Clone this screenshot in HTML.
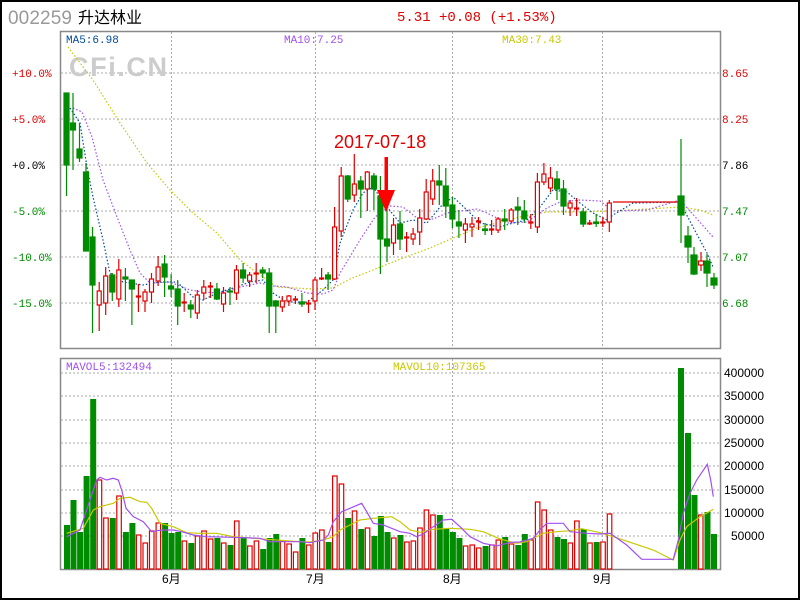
<!DOCTYPE html>
<html><head><meta charset="utf-8"><style>
html,body{margin:0;padding:0;background:#fff}
body{width:800px;height:600px;overflow:hidden}
</style></head><body>
<svg width="800" height="600" viewBox="0 0 800 600" xmlns="http://www.w3.org/2000/svg" font-family="Liberation Mono, monospace">
<rect x="1" y="1" width="798" height="598" fill="#fff" stroke="#000" stroke-width="2"/>
<text x="8" y="24" font-family="Liberation Sans, sans-serif" font-size="19" fill="#999" textLength="64">002259</text>
<text x="78" y="23" font-family="Liberation Sans, 'Noto Sans CJK SC', sans-serif" font-size="16" fill="#000">升达林业</text>
<text x="397" y="21" font-size="14" fill="#e00000">5.31 +0.08 (+1.53%)</text>

<rect x="60.5" y="31.5" width="660" height="317" fill="#fff" stroke="#888" stroke-width="1.5"/>
<g stroke="#aaa" stroke-width="1" stroke-dasharray="2 2">
<line x1="61" y1="73" x2="720" y2="73"/><line x1="61" y1="119" x2="720" y2="119"/><line x1="61" y1="165" x2="720" y2="165"/><line x1="61" y1="211" x2="720" y2="211"/><line x1="61" y1="257" x2="720" y2="257"/><line x1="61" y1="303" x2="720" y2="303"/>
<line x1="171.5" y1="32" x2="171.5" y2="348"/><line x1="315.5" y1="32" x2="315.5" y2="348"/><line x1="452.5" y1="32" x2="452.5" y2="348"/><line x1="602.5" y1="32" x2="602.5" y2="348"/>
</g>
<text x="69" y="76" font-family="Liberation Sans, sans-serif" font-weight="bold" font-size="27" fill="#ccc" textLength="98">CFi.CN</text>
<text x="66" y="43" font-size="11" fill="#004c99">MA5:6.98</text>
<text x="284" y="43" font-size="11" fill="#a050f0">MA10:7.25</text>
<text x="502" y="43" font-size="11" fill="#c8c800">MA30:7.43</text>
<g font-size="11">
<text x="12" y="77" fill="#e00000">+10.0%</text>
<text x="12" y="123" fill="#e00000">+5.0%</text>
<text x="12" y="169" fill="#000">+0.0%</text>
<text x="12" y="215" fill="#008c00">-5.0%</text>
<text x="12" y="261" fill="#008c00">-10.0%</text>
<text x="12" y="307" fill="#008c00">-15.0%</text>
<text x="722" y="77" fill="#e00000">8.65</text>
<text x="722" y="123" fill="#e00000">8.25</text>
<text x="722" y="169" fill="#000">7.86</text>
<text x="722" y="215" fill="#008c00">7.47</text>
<text x="722" y="261" fill="#008c00">7.07</text>
<text x="722" y="307" fill="#008c00">6.68</text>
</g>

<g fill="none" stroke-width="1.2" stroke-dasharray="1.5 2">
<polyline stroke="#c8c800" points="68,47 93,80 120,123 147,163 170,190 193,213 217,233 240,260 260,275 277,287 313,289 333,288 350,279 373,270 403,258 430,248 453,238 477,228 497,223 520,217 547,212 580,212 613,211 680,207 700,210 713,215"/>
<polyline stroke="#a050f0" points="73,108 82,112 92,137 103,180 117,217 130,250 140,273 150,283 170,282 190,290 203,292 220,293 240,287 260,283 273,286 287,287 307,293 323,294 333,290 340,273 360,240 375,217 390,206 403,207 417,218 433,219 447,213 460,211 477,209 487,213 507,223 527,222 547,208 560,202 580,200 600,201 613,211 647,210 680,200 690,211 713,237"/>
<polyline stroke="#004c99" points="70,108 80,123 87,167 93,197 103,240 110,273 123,282 143,285 160,282 177,282 193,297 203,300 217,293 233,288 250,282 263,280 273,293 287,302 307,302 323,290 333,280 340,243 353,210 363,193 373,187 387,207 400,223 413,220 427,223 440,207 453,197 467,210 480,223 500,227 513,223 527,220 540,207 553,190 567,192 580,203 593,213 607,220 613,215 633,203 680,202 693,227 707,253 713,267"/>
</g>
<line x1="613" y1="202" x2="680" y2="202" stroke="#e00000" stroke-width="1.2"/>

<g stroke-width="1.2">
<g stroke="#008c00" fill="#008c00">
<line x1="66.5" y1="93" x2="66.5" y2="196"/><rect x="64" y="93" width="5" height="72"/>
<line x1="73" y1="93" x2="73" y2="170"/><rect x="70.5" y="123" width="5" height="7"/>
<line x1="79.5" y1="123" x2="79.5" y2="162"/><rect x="77" y="149" width="5" height="9"/>
<line x1="86" y1="163" x2="86" y2="251"/><rect x="83.5" y="172" width="5" height="79"/>
<line x1="92.5" y1="227" x2="92.5" y2="333"/><rect x="90" y="237" width="5" height="48"/>
<line x1="112.3" y1="273" x2="112.3" y2="301"/><rect x="109.8" y="275" width="5" height="17"/>
<line x1="125.4" y1="268" x2="125.4" y2="301"/><rect x="122.9" y="277" width="5" height="2"/>
<line x1="131.9" y1="280" x2="131.9" y2="325"/><rect x="129.4" y="280" width="5" height="9"/>
<line x1="164.6" y1="255" x2="164.6" y2="297"/><rect x="162.1" y="264" width="5" height="13"/>
<line x1="171.1" y1="274" x2="171.1" y2="297"/><rect x="168.6" y="286" width="5" height="3"/>
<line x1="177.7" y1="280" x2="177.7" y2="325"/><rect x="175.2" y="289" width="5" height="17"/>
<line x1="190.8" y1="300" x2="190.8" y2="318"/><rect x="188.3" y="305" width="5" height="4"/>
<line x1="216.9" y1="283" x2="216.9" y2="300"/><rect x="214.4" y="289" width="5" height="10"/>
<line x1="230" y1="287" x2="230" y2="305"/><rect x="227.5" y="291" width="5" height="1"/>
<line x1="243.1" y1="263" x2="243.1" y2="283"/><rect x="240.6" y="270" width="5" height="8"/>
<line x1="262.7" y1="267" x2="262.7" y2="278"/><rect x="260.2" y="270" width="5" height="3"/>
<line x1="269.2" y1="268" x2="269.2" y2="333"/><rect x="266.7" y="273" width="5" height="33"/>
<line x1="275.8" y1="300" x2="275.8" y2="333"/><rect x="273.3" y="301" width="5" height="5"/>
<line x1="301.9" y1="293" x2="301.9" y2="307"/><rect x="299.4" y="302" width="5" height="2"/>
<line x1="328.1" y1="272" x2="328.1" y2="290"/><rect x="325.6" y="275" width="5" height="4"/>
<line x1="347.7" y1="175" x2="347.7" y2="202"/><rect x="345.2" y="176" width="5" height="23"/>
<line x1="360.8" y1="176" x2="360.8" y2="218"/><rect x="358.3" y="181" width="5" height="8"/>
<line x1="373.9" y1="173" x2="373.9" y2="210"/><rect x="371.4" y="176" width="5" height="13"/>
<line x1="380.4" y1="176" x2="380.4" y2="274"/><rect x="377.9" y="196" width="5" height="43"/>
<line x1="387" y1="207" x2="387" y2="262"/><rect x="384.5" y="239" width="5" height="7"/>
<line x1="400" y1="211" x2="400" y2="250"/><rect x="397.5" y="224" width="5" height="15"/>
<line x1="439.3" y1="165" x2="439.3" y2="205"/><rect x="436.8" y="181" width="5" height="4"/>
<line x1="445.8" y1="168" x2="445.8" y2="218"/><rect x="443.3" y="186" width="5" height="20"/>
<line x1="452.4" y1="197" x2="452.4" y2="228"/><rect x="449.9" y="205" width="5" height="14"/>
<line x1="458.9" y1="210" x2="458.9" y2="238"/><rect x="456.4" y="222" width="5" height="4"/>
<line x1="485.1" y1="223" x2="485.1" y2="235"/><rect x="482.6" y="229" width="5" height="1.5"/>
<line x1="504.7" y1="209" x2="504.7" y2="230"/><rect x="502.2" y="219" width="5" height="2"/>
<line x1="517.8" y1="197" x2="517.8" y2="225"/><rect x="515.3" y="207" width="5" height="3"/>
<line x1="524.3" y1="200" x2="524.3" y2="223"/><rect x="521.8" y="211" width="5" height="8"/>
<line x1="557" y1="171" x2="557" y2="200"/><rect x="554.5" y="179" width="5" height="10"/>
<line x1="563.5" y1="180" x2="563.5" y2="215"/><rect x="561" y="189" width="5" height="17"/>
<line x1="583.2" y1="208" x2="583.2" y2="227"/><rect x="580.7" y="212" width="5" height="12"/>
<line x1="596.2" y1="214" x2="596.2" y2="227"/><rect x="593.7" y="222" width="5" height="1.5"/>
<line x1="681" y1="139" x2="681" y2="243"/><rect x="678" y="196" width="6" height="19"/>
<line x1="688" y1="226" x2="688" y2="263"/><rect x="685" y="236" width="6" height="11"/>
<line x1="694" y1="247" x2="694" y2="275"/><rect x="691" y="255" width="6" height="19"/>
<line x1="707" y1="254" x2="707" y2="287"/><rect x="704" y="261" width="6" height="12"/>
<line x1="714" y1="273" x2="714" y2="289"/><rect x="711" y="278" width="6" height="7"/>
</g>
<g stroke="#e00000" fill="#fff">
<line x1="99.2" y1="282" x2="99.2" y2="331"/><rect x="97.2" y="291" width="4" height="14"/>
<line x1="105.7" y1="267" x2="105.7" y2="315"/><rect x="103.7" y="276" width="4" height="27"/>
<line x1="118.8" y1="259" x2="118.8" y2="307"/><rect x="116.8" y="270" width="4" height="29"/>
<line x1="138.4" y1="284" x2="138.4" y2="312"/><rect x="136.4" y="296" width="4" height="1"/>
<line x1="145" y1="289" x2="145" y2="312"/><rect x="143" y="292" width="4" height="9"/>
<line x1="151.5" y1="273" x2="151.5" y2="303"/><rect x="149.5" y="279" width="4" height="13"/>
<line x1="158.1" y1="256" x2="158.1" y2="286"/><rect x="156.1" y="267" width="4" height="14"/>
<line x1="184.2" y1="293" x2="184.2" y2="312"/><rect x="182.2" y="302" width="4" height="1"/>
<line x1="197.3" y1="290" x2="197.3" y2="319"/><rect x="195.3" y="295" width="4" height="18"/>
<line x1="203.8" y1="280" x2="203.8" y2="300"/><rect x="201.8" y="287" width="4" height="6"/>
<line x1="210.4" y1="282" x2="210.4" y2="298"/><rect x="208.4" y="286" width="4" height="1"/>
<line x1="223.5" y1="287" x2="223.5" y2="312"/><rect x="221.5" y="293" width="4" height="11"/>
<line x1="236.5" y1="265" x2="236.5" y2="300"/><rect x="234.5" y="270" width="4" height="23"/>
<line x1="249.6" y1="272" x2="249.6" y2="287"/><rect x="247.6" y="275" width="4" height="6"/>
<line x1="256.2" y1="263" x2="256.2" y2="283"/><rect x="254.2" y="273" width="4" height="1"/>
<line x1="282.3" y1="296" x2="282.3" y2="312"/><rect x="280.3" y="301" width="4" height="6"/>
<line x1="288.9" y1="295" x2="288.9" y2="306"/><rect x="286.9" y="296" width="4" height="5"/>
<line x1="295.4" y1="296" x2="295.4" y2="304"/><rect x="293.4" y="299" width="4" height="1"/>
<line x1="308.5" y1="300" x2="308.5" y2="313"/><rect x="306.5" y="303" width="4" height="1"/>
<line x1="315" y1="277" x2="315" y2="310"/><rect x="313" y="280" width="4" height="21"/>
<line x1="321.6" y1="268" x2="321.6" y2="280"/><rect x="319.6" y="278" width="4" height="1"/>
<line x1="334.6" y1="207" x2="334.6" y2="280"/><rect x="332.6" y="227" width="4" height="52"/>
<line x1="341.2" y1="167" x2="341.2" y2="237"/><rect x="339.2" y="176" width="4" height="55"/>
<line x1="354.3" y1="154" x2="354.3" y2="202"/><rect x="352.3" y="184" width="4" height="11"/>
<line x1="367.3" y1="171" x2="367.3" y2="211"/><rect x="365.3" y="172" width="4" height="17"/>
<line x1="393.5" y1="218" x2="393.5" y2="255"/><rect x="391.5" y="225" width="4" height="18"/>
<line x1="406.6" y1="232" x2="406.6" y2="252"/><rect x="404.6" y="237" width="4" height="1"/>
<line x1="413.1" y1="228" x2="413.1" y2="245"/><rect x="411.1" y="234" width="4" height="5"/>
<line x1="419.7" y1="209" x2="419.7" y2="245"/><rect x="417.7" y="218" width="4" height="14"/>
<line x1="426.2" y1="179" x2="426.2" y2="220"/><rect x="424.2" y="192" width="4" height="27"/>
<line x1="432.7" y1="169" x2="432.7" y2="205"/><rect x="430.7" y="181" width="4" height="18"/>
<line x1="465.4" y1="218" x2="465.4" y2="243"/><rect x="463.4" y="224" width="4" height="6"/>
<line x1="472" y1="217" x2="472" y2="237"/><rect x="470" y="224" width="4" height="3"/>
<line x1="478.5" y1="217" x2="478.5" y2="230"/><rect x="476.5" y="221" width="4" height="1"/>
<line x1="491.6" y1="220" x2="491.6" y2="235"/><rect x="489.6" y="229" width="4" height="1"/>
<line x1="498.1" y1="217" x2="498.1" y2="233"/><rect x="496.1" y="219" width="4" height="11"/>
<line x1="511.2" y1="208" x2="511.2" y2="223"/><rect x="509.2" y="210" width="4" height="11"/>
<line x1="530.8" y1="214" x2="530.8" y2="229"/><rect x="528.8" y="222" width="4" height="1"/>
<line x1="537.4" y1="173" x2="537.4" y2="233"/><rect x="535.4" y="182" width="4" height="45"/>
<line x1="543.9" y1="163" x2="543.9" y2="185"/><rect x="541.9" y="174" width="4" height="8"/>
<line x1="550.5" y1="167" x2="550.5" y2="192"/><rect x="548.5" y="178" width="4" height="10"/>
<line x1="570.1" y1="200" x2="570.1" y2="216"/><rect x="568.1" y="203" width="4" height="5"/>
<line x1="576.6" y1="198" x2="576.6" y2="216"/><rect x="574.6" y="208" width="4" height="1"/>
<line x1="589.7" y1="220" x2="589.7" y2="225"/><rect x="587.7" y="223" width="4" height="1"/>
<line x1="602.8" y1="217" x2="602.8" y2="227"/><rect x="600.8" y="222" width="4" height="1"/>
<line x1="609.3" y1="200" x2="609.3" y2="232"/><rect x="607.3" y="203" width="4" height="19"/>
<line x1="701" y1="252" x2="701" y2="271"/><rect x="698.5" y="261" width="5" height="4"/>
</g>
</g>

<text x="334" y="148" font-family="Liberation Sans, sans-serif" font-size="18" fill="#e00000">2017-07-18</text>
<rect x="384.5" y="157" width="3.5" height="34" fill="#ff0000"/>
<polygon points="377,190 395,190 386,212" fill="#ff0000"/>

<rect x="60.5" y="358.5" width="660" height="211" fill="#fff" stroke="#888" stroke-width="1.5"/>
<g stroke="#aaa" stroke-width="1" stroke-dasharray="2 2">
<line x1="61" y1="373" x2="720" y2="373"/><line x1="61" y1="396" x2="720" y2="396"/><line x1="61" y1="420" x2="720" y2="420"/><line x1="61" y1="443" x2="720" y2="443"/><line x1="61" y1="466" x2="720" y2="466"/><line x1="61" y1="490" x2="720" y2="490"/><line x1="61" y1="513" x2="720" y2="513"/><line x1="61" y1="536" x2="720" y2="536"/>
<line x1="171.5" y1="359" x2="171.5" y2="569"/><line x1="315.5" y1="359" x2="315.5" y2="569"/><line x1="452.5" y1="359" x2="452.5" y2="569"/><line x1="602.5" y1="359" x2="602.5" y2="569"/>
</g>
<text x="66" y="370" font-size="11" fill="#a050f0">MAVOL5:132494</text>
<text x="393" y="370" font-size="11" fill="#c8c800">MAVOL10:107365</text>
<g font-family="Liberation Sans, sans-serif" font-size="12" fill="#000">
<text x="724" y="377">400000</text><text x="724" y="400">350000</text><text x="724" y="424">300000</text><text x="724" y="447">250000</text><text x="724" y="470">200000</text><text x="724" y="494">150000</text><text x="724" y="517">100000</text><text x="731" y="540">50000</text>
</g>
<g font-family="Liberation Sans, 'Noto Sans CJK SC', sans-serif" font-size="12" fill="#000">
<text x="162" y="583">6月</text><text x="306" y="583">7月</text><text x="443" y="583">8月</text><text x="593" y="583">9月</text>
</g>

<g fill="#008c00">
<rect x="64" y="525" width="6" height="44"/><rect x="70.5" y="500" width="6" height="69"/><rect x="77.1" y="532" width="6" height="37"/><rect x="83.6" y="476" width="6" height="93"/><rect x="90.2" y="399" width="6" height="170"/>
<rect x="109.8" y="518" width="6" height="51"/><rect x="122.9" y="532" width="6" height="37"/><rect x="129.4" y="523" width="6" height="46"/>
<rect x="162.1" y="523" width="6" height="46"/><rect x="168.6" y="533" width="6" height="36"/><rect x="175.2" y="532" width="6" height="37"/><rect x="188.3" y="543" width="6" height="26"/>
<rect x="214.4" y="538" width="6" height="31"/><rect x="227.5" y="545" width="6" height="24"/><rect x="240.6" y="538" width="6" height="31"/><rect x="260.2" y="549" width="6" height="20"/><rect x="266.7" y="538" width="6" height="31"/><rect x="273.3" y="534" width="6" height="35"/>
<rect x="299.4" y="538" width="6" height="31"/><rect x="325.6" y="542" width="6" height="27"/><rect x="345.2" y="518" width="6" height="51"/><rect x="358.3" y="529" width="6" height="40"/><rect x="371.4" y="536" width="6" height="33"/><rect x="377.9" y="516" width="6" height="53"/><rect x="384.5" y="532" width="6" height="37"/><rect x="397.5" y="535" width="6" height="34"/>
<rect x="436.8" y="515" width="6" height="54"/><rect x="443.3" y="529" width="6" height="40"/><rect x="449.9" y="532" width="6" height="37"/><rect x="456.4" y="538" width="6" height="31"/><rect x="482.6" y="546" width="6" height="23"/><rect x="502.2" y="537" width="6" height="32"/><rect x="515.3" y="545" width="6" height="24"/><rect x="521.8" y="534" width="6" height="35"/>
<rect x="554.5" y="537" width="6" height="32"/><rect x="561" y="539" width="6" height="30"/><rect x="580.7" y="529" width="6" height="40"/><rect x="593.7" y="542" width="6" height="27"/>
<rect x="678" y="368" width="6" height="201"/><rect x="685" y="433" width="6" height="136"/><rect x="691.5" y="495" width="6" height="74"/><rect x="704.5" y="512" width="6" height="57"/><rect x="711" y="534" width="6" height="35"/>
</g>
<g fill="#fff" stroke="#e00000" stroke-width="1.2">
<rect x="97.2" y="480" width="4.5" height="89"/><rect x="103.7" y="518" width="4.5" height="51"/><rect x="116.8" y="496" width="4.5" height="73"/><rect x="136.4" y="535" width="4.5" height="34"/><rect x="143" y="543" width="4.5" height="26"/><rect x="149.5" y="531" width="4.5" height="38"/><rect x="156.1" y="523" width="4.5" height="46"/>
<rect x="182.2" y="541" width="4.5" height="28"/><rect x="195.3" y="536" width="4.5" height="33"/><rect x="201.8" y="531" width="4.5" height="38"/><rect x="208.4" y="539" width="4.5" height="30"/><rect x="221.5" y="543" width="4.5" height="26"/><rect x="234.5" y="521" width="4.5" height="48"/><rect x="247.6" y="546" width="4.5" height="23"/><rect x="254.2" y="541" width="4.5" height="28"/>
<rect x="280.3" y="541" width="4.5" height="28"/><rect x="286.9" y="544" width="4.5" height="25"/><rect x="293.4" y="552" width="4.5" height="17"/><rect x="306.5" y="545" width="4.5" height="24"/><rect x="313" y="533" width="4.5" height="36"/><rect x="319.6" y="530" width="4.5" height="39"/><rect x="332.6" y="476" width="4.5" height="93"/><rect x="339.2" y="484" width="4.5" height="85"/><rect x="352.3" y="511" width="4.5" height="58"/><rect x="365.3" y="528" width="4.5" height="41"/>
<rect x="391.5" y="538" width="4.5" height="31"/><rect x="404.6" y="542" width="4.5" height="27"/><rect x="411.1" y="541" width="4.5" height="28"/><rect x="417.7" y="528" width="4.5" height="41"/><rect x="424.2" y="510" width="4.5" height="59"/><rect x="430.7" y="515" width="4.5" height="54"/>
<rect x="463.4" y="546" width="4.5" height="23"/><rect x="470" y="545" width="4.5" height="24"/><rect x="476.5" y="548" width="4.5" height="21"/><rect x="489.6" y="545" width="4.5" height="24"/><rect x="496.1" y="540" width="4.5" height="29"/><rect x="509.2" y="544" width="4.5" height="25"/><rect x="528.8" y="540" width="4.5" height="29"/><rect x="535.4" y="502" width="4.5" height="67"/><rect x="541.9" y="510" width="4.5" height="59"/><rect x="548.5" y="530" width="4.5" height="39"/>
<rect x="568.1" y="543" width="4.5" height="26"/><rect x="574.6" y="521" width="4.5" height="48"/><rect x="587.7" y="543" width="4.5" height="26"/><rect x="600.8" y="542" width="4.5" height="27"/><rect x="607.3" y="514" width="4.5" height="55"/><rect x="698.5" y="515" width="4.5" height="54"/>
</g>
<g fill="none" stroke-width="1.2">
<polyline stroke="#c8c800" points="66.7,533.3 83.3,528.3 93.3,510 100,506.7 113.3,503.3 120,498.3 130,497.3 140,501.7 146.7,502.3 151.7,508.3 160,523.3 173.3,526.7 186.7,532.7 200,533.3 216.7,533.3 233.3,536.7 266.7,539.3 300,541.7 310,542 323.3,540 333.3,536.7 340,530 350,525 360,520 373.3,518.3 391.7,516.7 400,521.7 410,530 420,532.3 433.3,529.3 450,528.3 470,529.3 483.3,531.7 500,539 516.7,543.3 526.7,541.7 543.3,533.3 556.7,531.7 570,530.7 581.7,528.7 600,532.7 613.3,536.7 633.3,543.3 653.3,550 673.3,560 680,540 686.7,526.7 700,516.7 713.3,509.3"/>
<polyline stroke="#a050f0" points="66.7,536.7 80,530 90,500 96.7,480 100,477.3 106.7,480 113.3,478.3 118.3,480 121.7,490 126,508.3 133.3,516.7 143.3,521.7 151.7,531.7 156.7,530.7 163.3,530 173.3,530 181.7,531.7 193.3,535 206.7,536.7 233.3,537.3 260,538.3 270,541.7 300,541.7 310,542.7 323.3,540 328.3,535 333.3,521.7 341.7,511.7 350,508.3 361.7,503.3 366.7,511.7 373.3,523.3 383.3,525 400,531.7 410,533.3 416.7,536.7 423.3,534 433.3,526.7 443.3,520 451.7,519.3 460,526.7 470,536.7 483.3,543.3 496.7,546 510,542.3 520,542 533.3,538.3 540,530 546.7,523.3 563.3,523.3 570,531.7 586.7,533.3 600,534 610,533.3 626.7,545 641.7,559.3 673.3,559.3 678.3,540 683.3,513.3 690,493.3 696.7,480 707.3,464.3 710.7,480 713.3,496.7"/>
</g>
</svg>
</body></html>
